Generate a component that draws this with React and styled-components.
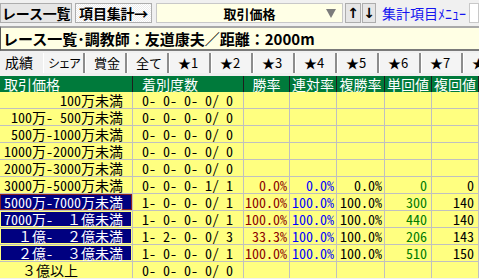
import React from 'react';
import styled, { createGlobalStyle } from 'styled-components';

const mono = `"Noto Sans Mono CJK JP", "Noto Sans CJK JP", "DejaVu Sans Mono", monospace`;
const ui = `"Noto Sans CJK JP", "DejaVu Sans", sans-serif`;

const GlobalStyle = createGlobalStyle`
  html, body {
    margin: 0;
    padding: 0;
    background: #f0f0f0;
    font-family: ${ui};
    overflow: hidden;
  }
`;

const Screen = styled.div`
  width: 479px;
  height: 279px;
  overflow: hidden;
  background: #f0f0f0;
`;

// top toolbar
const Toolbar = styled.div`
  display: flex;
  align-items: center;
  height: 24px;
  padding-top: 1px;
`;

const NavButton = styled.div`
  box-sizing: border-box;
  width: ${(p) => p.w}px;
  height: 20px;
  margin-right: ${(p) => p.gap || 0}px;
  display: flex;
  align-items: center;
  justify-content: center;
  border: 1px solid #adadad;
  background: ${(p) =>
    p.pressed
      ? 'repeating-conic-gradient(#ffffff 0% 25%, #ececec 0% 50%) 0 0 / 2px 2px'
      : '#e6e6e6'};
  font-family: ${ui};
  font-weight: bold;
  font-size: 14px;
  color: #000;
  letter-spacing: -0.2px;
`;

const Dropdown = styled.div`
  box-sizing: border-box;
  position: relative;
  width: 189px;
  height: 20px;
  margin-right: 2px;
  display: flex;
  align-items: center;
  justify-content: center;
  border: 1px solid #c8c8c8;
  background: #ffffe6;
  font-weight: bold;
  font-size: 13px;
`;

const Caret = styled.span`
  position: absolute;
  right: 6px;
  top: 5px;
  width: 0;
  height: 0;
  border-left: 5px solid transparent;
  border-right: 5px solid transparent;
  border-top: 9px solid #7c7c7c;
`;

const ArrowButton = styled.div`
  box-sizing: border-box;
  width: ${(p) => p.w}px;
  height: 20px;
  margin-right: ${(p) => p.gap || 0}px;
  display: flex;
  align-items: center;
  justify-content: center;
  border: 1px solid #adadad;
  background: #e6e6e6;
  font-family: "DejaVu Sans", sans-serif;
  font-weight: bold;
  font-size: 14px;
`;

const MenuLink = styled.span`
  margin-left: 6px;
  font-family: ${mono};
  font-size: 14px;
  color: #1414f0;
  white-space: nowrap;
`;

const SideBox = styled.div`
  margin-left: 3px;
  width: 10px;
  height: 20px;
  box-sizing: border-box;
  border: 1px solid #c8c8c8;
  background: #fff;
  flex-shrink: 0;
`;

// title bar under toolbar
const InfoBar = styled.div`
  box-sizing: border-box;
  height: 25px;
  margin-top: 1px;
  border-top: 2px solid #a8a8a8;
  border-left: 1px solid #5a5a5a;
  border-bottom: 2px solid #7a7a7a;
  background: #ffffe4;
  display: flex;
  align-items: center;
  padding-left: 2px;
  font-family: ${ui};
  font-weight: bold;
  font-size: 15px;
  white-space: nowrap;
`;

// tabs
const TabStrip = styled.div`
  display: flex;
  height: 20px;
  margin-top: 2px;
  margin-bottom: 3px;
`;

const Tab = styled.div`
  box-sizing: border-box;
  flex-shrink: 0;
  width: ${(p) => (p.active ? 43 : 42)}px;
  height: 20px;
  padding-left: ${(p) => (p.active ? 5 : p.tight ? 4 : 8)}px;
  padding-top: 1px;
  background: ${(p) => (p.active ? '#f0f0f0' : '#f4f4f4')};
  border-right: ${(p) => (p.active ? 'none' : '2px solid #8c8c8c')};
  border-left: ${(p) => (p.active ? 'none' : '1px solid #ffffff')};
  font-family: ${ui};
  font-size: ${(p) => (p.active ? 14 : p.tight ? 12 : 13)}px;
  letter-spacing: ${(p) => (p.tight ? -1.5 : 0)}px;
  line-height: 17px;
  color: #000;
  white-space: nowrap;
  overflow: hidden;
`;

// table
const cols = '132px 110px 45px 46px 47px 46px 46px 60px';

const HeadRow = styled.div`
  display: grid;
  grid-template-columns: ${cols};
  column-gap: 1px;
  background: #1e1e1e;
  width: max-content;
`;

const HeadCell = styled.div`
  height: 16px;
  background: #007a3b;
  color: #fff;
  font-family: ${mono};
  font-size: 14px;
  line-height: 16px;
  text-align: ${(p) => p.align || 'center'};
  padding-left: ${(p) => p.pad || 0}px;
  white-space: nowrap;
  overflow: hidden;
`;

const Body = styled.div`
  display: grid;
  grid-template-columns: ${cols};
  gap: 1px;
  background: #c0c0c0;
  width: max-content;
`;

const Cell = styled.div`
  box-sizing: border-box;
  height: 16px;
  background: ${(p) => (p.selected ? '#000080' : '#ffff80')};
  box-shadow: ${(p) =>
    p.focus ? 'inset 0 0 0 1px #8a2020' : p.selected ? 'inset 0 0 0 1px #ffff80' : 'none'};
  color: ${(p) => (p.selected ? '#fff' : p.color || '#000')};
  font-family: ${mono};
  font-size: 14px;
  line-height: 16px;
  text-align: ${(p) => p.align || 'right'};
  padding-right: ${(p) => p.pr ?? 2}px;
  padding-left: ${(p) => p.pl ?? 0}px;
  white-space: pre;
  overflow: hidden;
`;

const tabs = ['成績', 'シェア', '賞金', '全て', '★1', '★2', '★3', '★4', '★5', '★6', '★7', '★8'];

const heads = [
  { t: '取引価格', align: 'left', pad: 4 },
  { t: '着別度数', align: 'left', pad: 9 },
  { t: '勝率' },
  { t: '連対率' },
  { t: '複勝率' },
  { t: '単回値' },
  { t: '複回値' },
  { t: '' },
];

const full = ['100.0%', '100.0%', '100.0%'];

const rows = [
  { label: '100万未満', rec: '0- 0- 0- 0/ 0' },
  { label: '100万- 500万未満', rec: '0- 0- 0- 0/ 0' },
  { label: '500万-1000万未満', rec: '0- 0- 0- 0/ 0' },
  { label: '1000万-2000万未満', rec: '0- 0- 0- 0/ 0' },
  { label: '2000万-3000万未満', rec: '0- 0- 0- 0/ 0' },
  { label: '3000万-5000万未満', rec: '0- 0- 0- 1/ 1', rates: ['0.0%', '0.0%', '0.0%'], tan: '0', fuku: '0' },
  { label: '5000万-7000万未満', rec: '1- 0- 0- 0/ 1', rates: full, tan: '300', fuku: '140', selected: true, focus: true },
  { label: '7000万-　１億未満', rec: '1- 0- 0- 0/ 1', rates: full, tan: '440', fuku: '140', selected: true },
  { label: '　１億-　２億未満', rec: '1- 2- 0- 0/ 3', rates: ['33.3%', '100.0%', '100.0%'], tan: '206', fuku: '143', selected: true },
  { label: '　２億-　３億未満', rec: '1- 0- 0- 0/ 1', rates: full, tan: '510', fuku: '150', selected: true },
  { label: '　３億以上', rec: '0- 0- 0- 0/ 0', left: true },
];

const rateColors = ['#8b0000', '#0000ff', '#000000'];

export default function App() {
  return (
    <Screen>
      <GlobalStyle />
      <Toolbar>
        <NavButton w={73} gap={3}>レース一覧</NavButton>
        <NavButton w={77} gap={4} pressed>項目集計→</NavButton>
        <Dropdown>
          取引価格
          <Caret />
        </Dropdown>
        <ArrowButton w={16} gap={1}>↑</ArrowButton>
        <ArrowButton w={14}>↓</ArrowButton>
        <MenuLink>集計項目ﾒﾆｭｰ</MenuLink>
        <SideBox />
      </Toolbar>

      <InfoBar>レース一覧･調教師：友道康夫／距離：2000m</InfoBar>

      <TabStrip>
        {tabs.map((t, i) => (
          <Tab key={t} active={i === 0} tight={t === 'シェア'}>
            {t}
          </Tab>
        ))}
      </TabStrip>

      <HeadRow>
        {heads.map((h, i) => (
          <HeadCell key={i} align={h.align} pad={h.pad}>
            {h.t}
          </HeadCell>
        ))}
      </HeadRow>

      <Body>
        {rows.map((r) => (
          <React.Fragment key={r.label}>
            <Cell
              selected={r.selected}
              focus={r.focus}
              align={r.left ? 'left' : 'right'}
              pl={r.left ? 8 : 0}
              pr={r.left ? 0 : 9}
            >
              {r.label}
            </Cell>
            <Cell align="left" pl={9}>{r.rec}</Cell>
            {[0, 1, 2].map((k) => (
              <Cell key={k} color={rateColors[k]}>
                {r.rates ? r.rates[k] : ''}
              </Cell>
            ))}
            <Cell color="#007a00" pr={4}>{r.tan || ''}</Cell>
            <Cell pr={4}>{r.fuku || ''}</Cell>
            <Cell />
          </React.Fragment>
        ))}
      </Body>
    </Screen>
  );
}
